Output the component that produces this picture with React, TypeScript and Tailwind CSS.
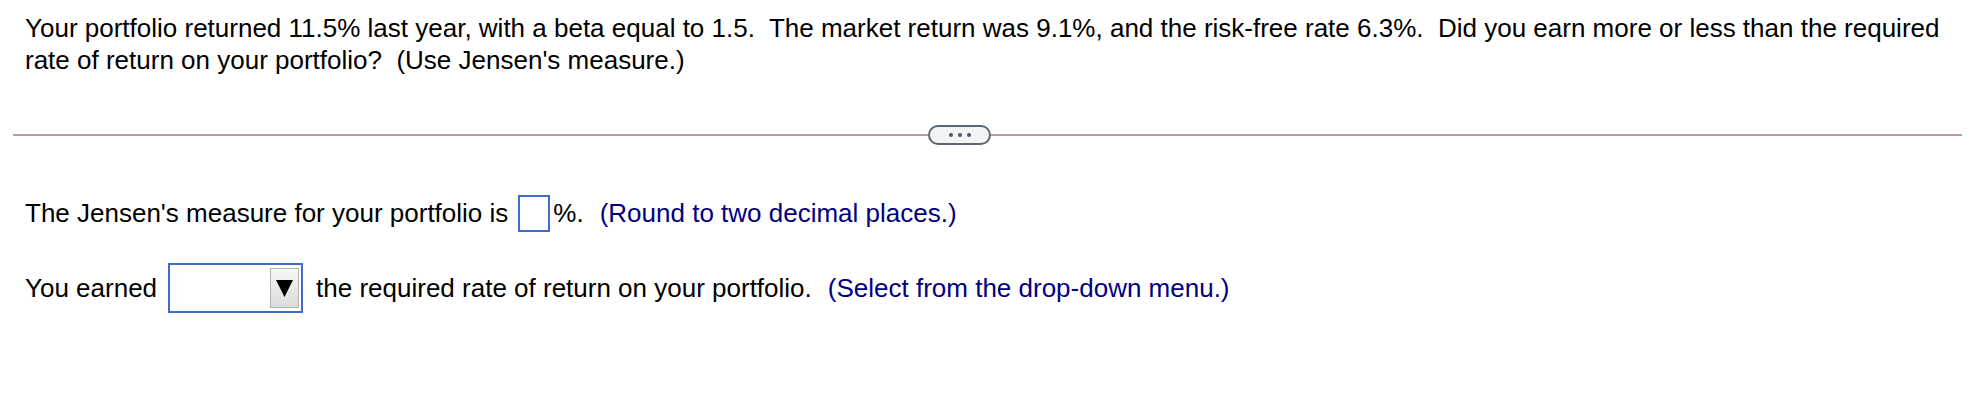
export default function App() {
  return (
    <div
      className="w-[1980px] h-[414px] bg-white text-black"
      style={{ fontFamily: '"Liberation Sans", Arial, sans-serif' }}
    >
      <div className="pl-[25px] pr-[30px] pt-[12px] text-[26px] leading-[32px] whitespace-nowrap">
        <p>
          Your portfolio returned 11.5% last year, with a beta equal to 1.5.&nbsp; The market return was 9.1%, and the
          risk-free rate 6.3%.&nbsp; Did you earn more or less than the required
          <br />
          rate of return on your portfolio?&nbsp; (Use Jensen's measure.)
        </p>
      </div>

      <div className="flex items-center pl-[13px] pr-[18px] mt-[49px]">
        <div className="w-[915px] h-[2px] bg-[#bc9aa8]" />
        <div className="flex items-center justify-center gap-[5px] w-[63px] h-[20px] rounded-full border-2 border-[#5b6774] bg-[#f2f3f5]">
          <span className="w-[4px] h-[4px] rounded-full bg-[#4b5563]" />
          <span className="w-[4px] h-[4px] rounded-full bg-[#4b5563]" />
          <span className="w-[4px] h-[4px] rounded-full bg-[#4b5563]" />
        </div>
        <div className="flex-1 h-[2px] bg-[#bc9aa8]" />
      </div>

      <div className="pl-[25px] text-[26px]">
        <div className="flex items-center h-[37px] mt-[50px]">
          <span>The Jensen's measure for your portfolio is</span>
          <span className="ml-[10px] w-[32px] h-[37px] border-2 border-[#3f6ccc] bg-white" />
          <span className="ml-[3px]">%.</span>
          <span className="ml-[16px] text-[#000080]">(Round to two decimal places.)</span>
        </div>

        <div className="flex items-center h-[50px] mt-[31px]">
          <span>You earned</span>
          <div className="ml-[11px] w-[135px] h-[50px] border-2 border-[#3f6ccc] bg-white flex items-center justify-end pr-[2px]">
            <div className="w-[29px] h-[40px] border border-[#b5b5b5] bg-gradient-to-b from-[#f7f7f7] to-[#dcdcdc] flex items-center justify-center">
              <svg width="17" height="20" viewBox="0 0 17 20">
                <polygon points="0,2 17,2 8.5,19" fill="#000" />
              </svg>
            </div>
          </div>
          <span className="ml-[13px]">the required rate of return on your portfolio.</span>
          <span className="ml-[16px] text-[#000080]">(Select from the drop-down menu.)</span>
        </div>
      </div>
    </div>
  );
}
